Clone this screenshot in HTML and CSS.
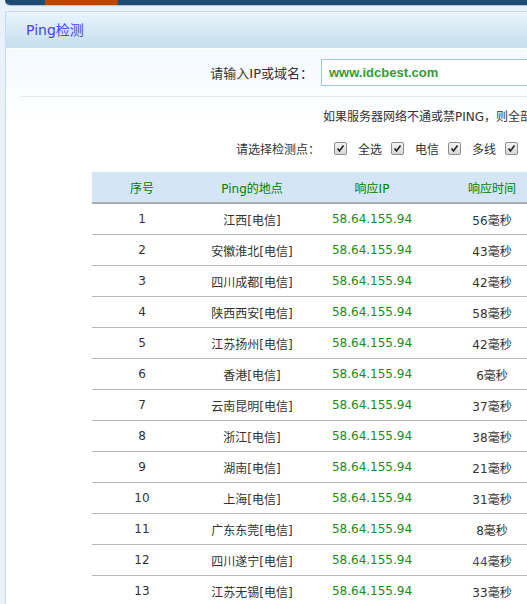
FILE: index.html
```html
<!DOCTYPE html>
<html lang="zh-CN">
<head>
    <meta charset="UTF-8">
    <title>Ping检测</title>
    <link rel="stylesheet" href="styles.css">
</head>
<body>
    <div class="topbar"><span class="topbar-tab"></span></div>

    <div class="panel">
        <div class="panel-head">Ping检测</div>

        <div class="query-row">
            <label class="query-label" for="host">请输入IP或域名：</label>
            <input type="text" id="host" class="query-input" value="www.idcbest.com">
        </div>
        <div class="divider"></div>

        <p class="notice">如果服务器网络不通或禁PING，则全部检测点都会显示超时</p>

        <div class="points">
            <span class="points-title">请选择检测点：</span>
            <span class="cb"><svg viewBox="0 0 13 13" width="13" height="13"><path d="M3.5 6.5 L5.5 9 L9.5 3.5" fill="none" stroke="#222" stroke-width="1.6"/></svg></span><span class="points-name">全选</span>
            <span class="cb"><svg viewBox="0 0 13 13" width="13" height="13"><path d="M3.5 6.5 L5.5 9 L9.5 3.5" fill="none" stroke="#222" stroke-width="1.6"/></svg></span><span class="points-name">电信</span>
            <span class="cb"><svg viewBox="0 0 13 13" width="13" height="13"><path d="M3.5 6.5 L5.5 9 L9.5 3.5" fill="none" stroke="#222" stroke-width="1.6"/></svg></span><span class="points-name">多线</span>
            <span class="cb"><svg viewBox="0 0 13 13" width="13" height="13"><path d="M3.5 6.5 L5.5 9 L9.5 3.5" fill="none" stroke="#222" stroke-width="1.6"/></svg></span><span class="points-name">联通</span>
        </div>

        <table class="result">
            <thead>
                <tr><th class="c-no">序号</th><th class="c-loc">Ping的地点</th><th class="c-ip">响应IP</th><th class="c-time">响应时间</th></tr>
            </thead>
            <tbody>
                <tr><td>1</td><td>江西[电信]</td><td class="ip">58.64.155.94</td><td>56毫秒</td></tr>
                <tr><td>2</td><td>安徽淮北[电信]</td><td class="ip">58.64.155.94</td><td>43毫秒</td></tr>
                <tr><td>3</td><td>四川成都[电信]</td><td class="ip">58.64.155.94</td><td>42毫秒</td></tr>
                <tr><td>4</td><td>陕西西安[电信]</td><td class="ip">58.64.155.94</td><td>58毫秒</td></tr>
                <tr><td>5</td><td>江苏扬州[电信]</td><td class="ip">58.64.155.94</td><td>42毫秒</td></tr>
                <tr><td>6</td><td>香港[电信]</td><td class="ip">58.64.155.94</td><td>6毫秒</td></tr>
                <tr><td>7</td><td>云南昆明[电信]</td><td class="ip">58.64.155.94</td><td>37毫秒</td></tr>
                <tr><td>8</td><td>浙江[电信]</td><td class="ip">58.64.155.94</td><td>38毫秒</td></tr>
                <tr><td>9</td><td>湖南[电信]</td><td class="ip">58.64.155.94</td><td>21毫秒</td></tr>
                <tr><td>10</td><td>上海[电信]</td><td class="ip">58.64.155.94</td><td>31毫秒</td></tr>
                <tr><td>11</td><td>广东东莞[电信]</td><td class="ip">58.64.155.94</td><td>8毫秒</td></tr>
                <tr><td>12</td><td>四川遂宁[电信]</td><td class="ip">58.64.155.94</td><td><span class="slow">44</span>毫秒</td></tr>
                <tr><td>13</td><td>江苏无锡[电信]</td><td class="ip">58.64.155.94</td><td>33毫秒</td></tr>
                <tr><td>14</td><td>广东广州[电信]</td><td class="ip">58.64.155.94</td><td>9毫秒</td></tr>
            </tbody>
        </table>
    </div>
</body>
</html>
```

FILE: styles.css
```css
* {
    margin: 0;
    padding: 0;
    box-sizing: border-box;
}

body {
    font-family: "DejaVu Sans", Verdana, "Noto Sans CJK SC", sans-serif;
    font-size: 12px;
    color: #333;
    background: #e9f2fa;
    overflow: hidden;
}

.topbar {
    height: 5px;
    margin-left: 5px;
    background: #1f4a73;
    border-radius: 0 0 0 5px;
    box-shadow: 0 1px 1px rgba(80, 100, 120, 0.35);
}

.topbar-tab {
    display: block;
    width: 73px;
    height: 5px;
    margin-left: 40px;
    background: #b34800;
}

.panel {
    margin: 6px 0 0 5px;
    width: 900px;
    border-left: 1px solid #c6dcee;
    border-top: 1px solid #c6dcee;
    background: linear-gradient(#eef6fd, #fff 110px);
    min-height: 700px;
}

.panel-head {
    height: 37px;
    line-height: 37px;
    padding-left: 20px;
    font-size: 14px;
    color: #4444ee;
    background: linear-gradient(#eaf4fc, #c5deed);
    border-bottom: 1px solid #fff;
}

.query-row {
    display: flex;
    align-items: center;
    margin-top: 10px;
}

.query-label {
    width: 307px;
    text-align: right;
    font-size: 13px;
    color: #333;
}

.query-input {
    margin-left: 8px;
    width: 300px;
    height: 27px;
    padding: 0 7px;
    border: 1px solid #9cc8df;
    background: #fff;
    font-family: "Liberation Sans", Arial, sans-serif;
    font-size: 13px;
    font-weight: bold;
    color: #2e9e3a;
    outline: none;
}

.divider {
    margin: 10px 0 0 15px;
    height: 1px;
    background: #dde8f1;
}

.notice {
    margin-top: 10px;
    padding-left: 317px;
    line-height: 20px;
    white-space: nowrap;
}

.points {
    display: flex;
    align-items: center;
    margin-top: 11px;
    padding-left: 230px;
    height: 20px;
    white-space: nowrap;
}

.points-title {
    margin-right: 14px;
}

.cb {
    display: inline-flex;
    width: 13px;
    height: 13px;
    border: 1px solid #8e8e8e;
    border-radius: 2px;
    background: linear-gradient(#f4f4f4, #d8d8d8);
}

.cb svg {
    margin: -1px;
}

.points-name {
    margin: 0 9px 0 11px;
}

.result {
    margin: 14px 0 0 86px;
    border-collapse: collapse;
    table-layout: fixed;
    width: 460px;
}

.result th {
    height: 31px;
    font-weight: normal;
    color: #008000;
    background: #d4e5f6;
    border-bottom: 2px solid #acacac;
}

.result td {
    height: 31px;
    padding-top: 1px;
    text-align: center;
    border-bottom: 1px solid #b8b8b8;
    white-space: nowrap;
}

.c-no {
    width: 100px;
}

.c-loc,
.c-ip,
.c-time {
    width: 120px;
}

.result td.ip {
    color: #1a8c1a;
}

.slow {
    color: #4b3b94;
}
```
